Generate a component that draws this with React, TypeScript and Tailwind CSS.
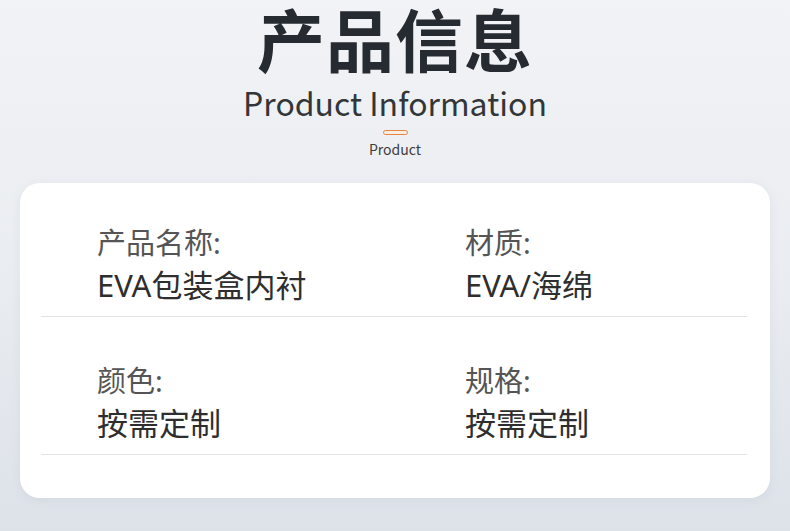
import React from 'react';

type Field = { label: string; value: string };

const rows: Field[][] = [
  [
    { label: '产品名称:', value: 'EVA包装盒内衬' },
    { label: '材质:', value: 'EVA/海绵' },
  ],
  [
    { label: '颜色:', value: '按需定制' },
    { label: '规格:', value: '按需定制' },
  ],
];

const font = { fontFamily: '"Noto Sans CJK SC", "Noto Sans", sans-serif' };
const cardFont = { fontFamily: '"Noto Sans", "Noto Sans CJK SC", sans-serif' };

export default function App() {
  return (
    <div
      className="w-[790px] h-[531px] overflow-hidden flex flex-col items-center bg-gradient-to-b from-[#f1f3f6] via-[#eaedf1] to-[#dde2e9]"
      style={font}
    >
      {/* heading */}
      <h1 className="mt-[1px] text-[68px] leading-[1.1] font-bold text-[#262a31] tracking-[1px]">产品信息</h1>
      <p className="mt-[7px] text-[32px] leading-[1.2] text-[#333639]">Product Information</p>
      <div className="mt-[9px] w-[25px] h-[5px] rounded-full border-[1.5px] border-[#e8843c] bg-[#fbeee4]" />
      <p className="mt-[6px] text-[14px] leading-[1.2] text-[#3d3d3d]">Product</p>

      {/* info card */}
      <div
        className="mt-[25px] w-[750px] h-[315px] bg-white rounded-[20px] shadow-[0_2px_10px_rgba(150,160,175,0.15)] pl-[21px] pr-[23px]"
        style={cardFont}
      >
        {rows.map((row, i) => (
          <div
            key={i}
            className={`grid grid-cols-[368px_1fr] pl-[56px] border-b border-[#e3e3e3] pb-[15px] ${i === 0 ? 'pt-[45px]' : 'pt-[49px]'}`}
          >
            {row.map(f => (
              <div key={f.label} className="flex flex-col">
                <span className="text-[29px] leading-none text-[#555555]">{f.label}</span>
                <span className="mt-[13px] text-[31px] leading-none text-[#2e2e2e]">{f.value}</span>
              </div>
            ))}
          </div>
        ))}
      </div>
    </div>
  );
}
